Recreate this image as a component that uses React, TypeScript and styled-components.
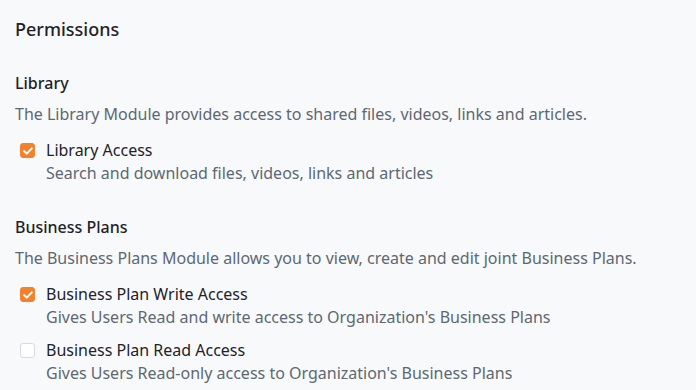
import React from 'react';
import styled, { createGlobalStyle } from 'styled-components';

const GlobalStyle = createGlobalStyle`
  html, body {
    margin: 0;
    padding: 0;
    background: #f8f9fb;
  }
  body {
    font-family: 'Noto Sans', Inter, sans-serif;
    color: #1f2329;
  }
`;

const StyledPage = styled.div`
  display: flex;
  flex-direction: column;
  padding: 17px 15px 0;
  width: 696px;
  height: 390px;
  box-sizing: border-box;
  overflow: hidden;
`;

const StyledTitle = styled.h2`
  margin: 0 0 31px;
  font-size: 18px;
  font-weight: 500;
  line-height: 24px;
  color: #1f2329;
`;

const StyledSection = styled.section`
  display: flex;
  flex-direction: column;
  margin-bottom: 21px;
`;

const StyledSectionTitle = styled.h3`
  margin: 0 0 8px;
  font-size: 16px;
  font-weight: 500;
  line-height: 23px;
  color: #1f2329;
`;

const StyledSectionText = styled.p`
  margin: 0 0 13px;
  font-size: 16px;
  line-height: 23px;
  color: #5d6873;
`;

const StyledOption = styled.label`
  display: grid;
  grid-template-columns: 15px 1fr;
  column-gap: 11px;
  padding-left: 5px;
  margin-bottom: 10px;
  cursor: pointer;
`;

const StyledBox = styled.span<{ checked: boolean }>`
  display: flex;
  align-items: center;
  justify-content: center;
  width: 15px;
  height: 15px;
  margin-top: 4px;
  box-sizing: border-box;
  border-radius: 3px;
  background: ${(props) => (props.checked ? '#f5822a' : '#ffffff')};
  border: 1px solid ${(props) => (props.checked ? '#f5822a' : '#d6dbe2')};
`;

const StyledOptionText = styled.div`
  display: flex;
  flex-direction: column;
`;

const StyledOptionLabel = styled.span`
  font-size: 16px;
  line-height: 23px;
  color: #1f2329;
`;

const StyledOptionHint = styled.span`
  font-size: 16px;
  line-height: 23px;
  color: #5d6873;
`;

interface OptionProps {
  label: string;
  hint: string;
  checked?: boolean;
}

const Option = ({ label, hint, checked = false }: OptionProps) => (
  <StyledOption>
    <StyledBox checked={checked}>
      {checked && (
        <svg width="10" height="8" viewBox="0 0 10 8">
          <path d="M1.2 4.2 L3.8 6.6 L8.8 1.4" fill="none" stroke="#fff" strokeWidth="2" strokeLinecap="round" strokeLinejoin="round" />
        </svg>
      )}
    </StyledBox>
    <StyledOptionText>
      <StyledOptionLabel>{label}</StyledOptionLabel>
      <StyledOptionHint>{hint}</StyledOptionHint>
    </StyledOptionText>
  </StyledOption>
);

const App = () => (
  <>
    <GlobalStyle />
    <StyledPage>
      <StyledTitle>Permissions</StyledTitle>
      <StyledSection>
        <StyledSectionTitle>Library</StyledSectionTitle>
        <StyledSectionText>
          The Library Module provides access to shared files, videos, links and articles.
        </StyledSectionText>
        <Option checked label="Library Access" hint="Search and download files, videos, links and articles" />
      </StyledSection>
      <StyledSection>
        <StyledSectionTitle>Business Plans</StyledSectionTitle>
        <StyledSectionText>
          The Business Plans Module allows you to view, create and edit joint Business Plans.
        </StyledSectionText>
        <Option
          checked
          label="Business Plan Write Access"
          hint="Gives Users Read and write access to Organization's Business Plans"
        />
        <Option
          label="Business Plan Read Access"
          hint="Gives Users Read-only access to Organization's Business Plans"
        />
      </StyledSection>
    </StyledPage>
  </>
);

export default App;
